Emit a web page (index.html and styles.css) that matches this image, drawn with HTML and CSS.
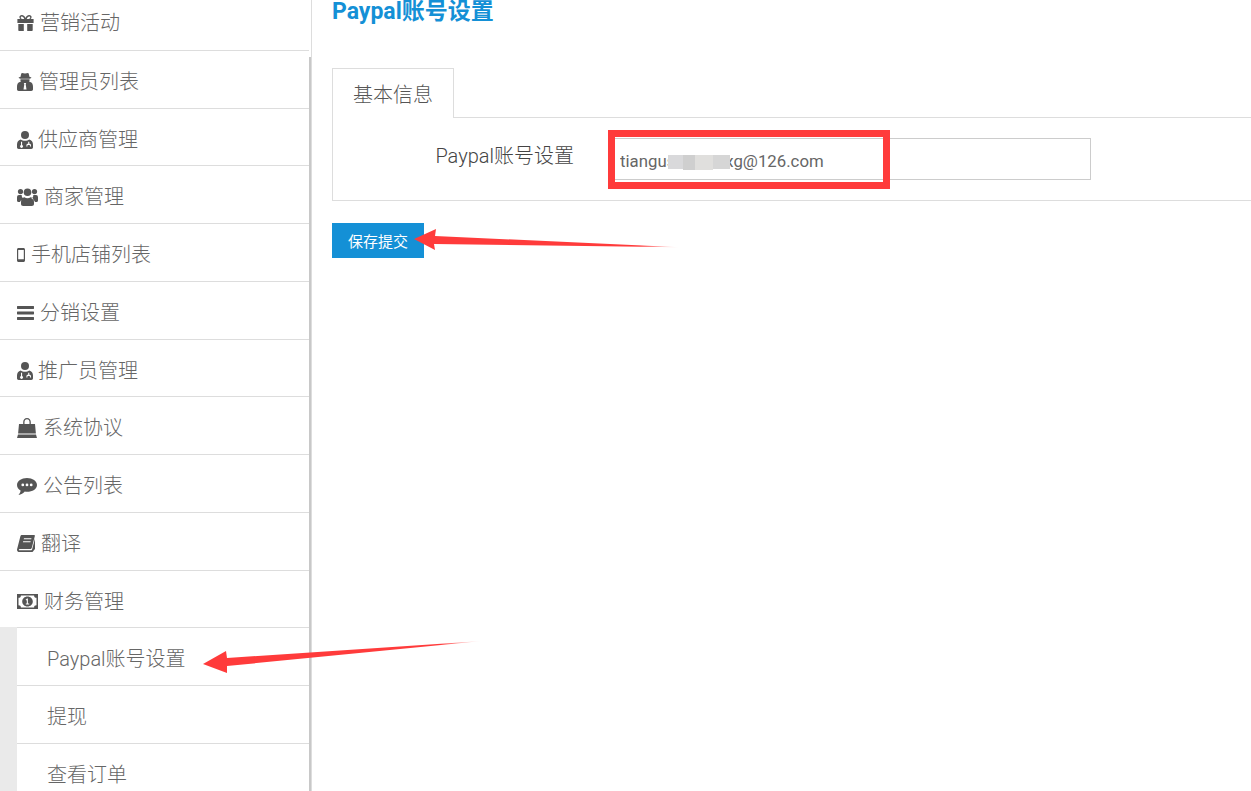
FILE: index.html
```html
<!DOCTYPE html>
<html lang="zh-CN">
<head>
<meta charset="utf-8">
<title>Paypal账号设置</title>
<link rel="stylesheet" href="styles.css">
</head>
<body>
<div class="page">
  <aside class="sidebar">
    <nav class="menu">
      <a class="item item-first"><svg class="icon" width="17" height="16" viewBox="0 0 17 16"><path fill-rule="evenodd" d="M4.800 0C3.300 0 2.400 1 2.400 2.100 2.400 3 2.800 3.600 3.400 4H.4v4h16.200V4h-3c.6-.4 1-1 1-1.900C14.600 1 13.700 0 12.200 0 10.400 0 9.100 1.400 8.500 2.900 7.900 1.400 6.600 0 4.800 0zM4.900 1.500c1 0 1.900 1.200 2.400 2.400H5c-.8 0-1.200-.8-1.200-1.300 0-.6.400-1.100 1.100-1.100zM12.100 1.500c.7 0 1.100.5 1.100 1.100 0 .5-.4 1.300-1.200 1.300H9.700c.5-1.200 1.400-2.400 2.400-2.400z"/><path d="M1.300 9h5.500v7H2.300c-.6 0-1-.4-1-1zM10.200 9h5.500v6c0 .6-.4 1-1 1h-4.500z"/></svg><span>营销活动</span></a>
      <a class="item"><svg class="icon" width="16" height="18" viewBox="0 0 16 18"><path fill-rule="evenodd" d="M5 0c.8 0 1.800.5 3 .5S10.200 0 11 0c.7 0 1.200 2.200 1.400 3.800 1 .2 2 .5 2 1 0 .4-.9.7-1.900.9H3.500C2.500 5.500 1.600 5.200 1.600 4.800c0-.5 1-.8 2-1C3.800 2.200 4.300 0 5 0z"/><path fill-rule="evenodd" d="M3.500 6.300h9c.2.7.1 1.700-.3 2.500l.9.200c1.900.4 2.900 2 2.900 4.700v2.600c0 1-.7 1.700-1.700 1.700H1.700C.7 18 0 17.300 0 16.300v-2.600C0 11 1 9.400 2.900 9l.9-.2C3.400 8 3.300 7 3.500 6.300zM6.800 10l.5 1.200-.8 5.300h3l-.8-5.300.5-1.200z"/></svg><span>管理员列表</span></a>
      <a class="item item-tight"><svg class="icon" width="16" height="18" viewBox="0 0 16 18"><circle cx="8" cy="4" r="4"/><path fill-rule="evenodd" d="M3.700 8.400C4.800 9.200 6.300 9.700 8 9.700s3.200-.5 4.300-1.300C14.600 9 16 10.800 16 13.500v2.800c0 1-.7 1.700-1.700 1.700H1.700C.7 18 0 17.300 0 16.300v-2.800C0 10.800 1.400 9 3.700 8.400zM4 10.800v3.100a1.500 1.500 0 1 0 1.100 0v-3.100zM11.200 10.800v2H10.500c-.5 0-.8.3-.9.800l-.3 1.900h1.100l.2-1.600h2.200l.2 1.600h1.100l-.3-1.900c-.1-.5-.4-.8-.9-.8h-.6v-2z"/></svg><span>供应商管理</span></a>
      <a class="item"><svg class="icon" width="21" height="18" viewBox="0 0 21 18"><circle cx="3.500" cy="3.600" r="2.600"/><circle cx="17.500" cy="3.600" r="2.600"/><circle cx="10.500" cy="4.300" r="3.800"/><path d="M0 9.500C0 7.800.8 7 2 7h2.700c-.1 1.700.7 3 1.900 3.800C4.600 11.500 3.500 12.500 3 14H1.500C.6 14 0 13.400 0 12.500zM21 9.500C21 7.800 20.200 7 19 7h-2.700c.1 1.700-.7 3-1.900 3.800 2 .7 3.100 1.700 3.600 3.200h1.500c.9 0 1.500-.6 1.500-1.500zM7.500 9.300c.8.700 1.800 1 3 1s2.200-.3 3-1c2.300.3 3.500 2 3.500 5v1.400c0 1.300-.8 2.300-2.200 2.300H6.200C4.800 18 4 17 4 15.700v-1.400c0-3 1.200-4.700 3.500-5z"/></svg><span>商家管理</span></a>
      <a class="item"><svg class="icon" width="8" height="14" viewBox="0 0 8 14"><path fill-rule="evenodd" d="M1.500 0h5C7.300 0 8 .7 8 1.500v11c0 .8-.7 1.500-1.500 1.500h-5C.7 14 0 13.300 0 12.500v-11C0 .7.700 0 1.500 0zM1.200 2v9.300h5.600V2z"/></svg><span>手机店铺列表</span></a>
      <a class="item"><svg class="icon" width="17" height="14" viewBox="0 0 17 14"><path d="M.5 0h16c.3 0 .5.200.5.500v2c0 .3-.2.500-.5.500H.5C.2 3 0 2.800 0 2.500v-2C0 .2.200 0 .5 0zM.5 5.500h16c.3 0 .5.200.5.500v2c0 .3-.2.500-.5.500H.5C.2 8.500 0 8.300 0 8V6c0-.3.200-.5.500-.5zM.5 11h16c.3 0 .5.200.5.500v2c0 .3-.2.500-.5.500H.5c-.3 0-.5-.2-.5-.5v-2c0-.3.200-.5.500-.5z"/></svg><span>分销设置</span></a>
      <a class="item item-tight"><svg class="icon" width="16" height="18" viewBox="0 0 16 18"><circle cx="8" cy="4" r="4"/><path fill-rule="evenodd" d="M3.700 8.400C4.800 9.200 6.300 9.700 8 9.700s3.200-.5 4.300-1.300C14.600 9 16 10.800 16 13.500v2.800c0 1-.7 1.700-1.700 1.700H1.700C.7 18 0 17.300 0 16.300v-2.800C0 10.800 1.400 9 3.700 8.400zM4 10.800v3.100a1.500 1.500 0 1 0 1.100 0v-3.100zM11.200 10.800v2H10.500c-.5 0-.8.3-.9.800l-.3 1.900h1.100l.2-1.600h2.200l.2 1.600h1.100l-.3-1.900c-.1-.5-.4-.8-.9-.8h-.6v-2z"/></svg><span>推广员管理</span></a>
      <a class="item"><svg class="icon" width="20" height="20" viewBox="0 0 20 20"><path fill-rule="evenodd" d="M10 0c2.400 0 3.800 1.800 3.800 4.100V6H18l.9 9.500H1.100L2 6h4.200V4.100C6.200 1.800 7.600 0 10 0zM10 1.300c-1.600 0-2.500 1.200-2.500 2.800V6h5V4.100c0-1.600-.9-2.800-2.500-2.800z"/><path d="M1 16.500h18L20 20H0z"/></svg><span>系统协议</span></a>
      <a class="item"><svg class="icon" width="20" height="17" viewBox="0 0 20 17"><path fill-rule="evenodd" d="M10 0c5.500 0 10 3 10 6.900s-4.500 6.900-10 6.900c-.8 0-1.500-.1-2.200-.2C6.300 15.500 4 16.600 1.500 17c1-1.200 1.900-2.500 2.100-4.500C1.400 11.200 0 9.200 0 6.900 0 3 4.500 0 10 0zM5.800 5.500a1.400 1.400 0 1 0 0 2.800 1.400 1.400 0 0 0 0-2.800zM10 5.500a1.400 1.400 0 1 0 0 2.800 1.400 1.400 0 0 0 0-2.800zM14.200 5.500a1.400 1.400 0 1 0 0 2.800 1.400 1.400 0 0 0 0-2.800z"/></svg><span>公告列表</span></a>
      <a class="item"><svg class="icon" width="18" height="17" viewBox="0 0 18 17"><path fill-rule="evenodd" d="M5 0h12c.7 0 1 .5.800 1.200l-3 11.600c-.2.800-.9 1.200-1.600 1.200H2.800c-.6 0-1 .3-1 .7 0 .3.300.6.900.6h11.600c.3 0 .6-.2.700-.5L18 3.600V14l-1.500 1.800c-.3.800-1 1.200-1.800 1.200H2.500C1.100 17 0 16.100 0 14.700c0-.4.100-.7.200-1L3.400 1.300C3.600.5 4.200 0 5 0zM7 3.300l-.3 1h7.500l.3-1zM6.200 6.300l-.3 1h7.500l.3-1z"/></svg><span>翻译</span></a>
      <a class="item item-open"><svg class="icon" width="21" height="15" viewBox="0 0 21 15"><path fill-rule="evenodd" d="M0 0h21v15H0zM1.500 3.800v7.400c1.700 0 2.400.8 2.400 2.400h13.200c0-1.600.7-2.400 2.400-2.400V3.800c-1.700 0-2.400-.8-2.400-2.400H3.900c0 1.600-.7 2.400-2.400 2.400zM10.500 2.500c3 0 5.300 2.200 5.300 5s-2.300 5-5.300 5-5.300-2.200-5.300-5 2.300-5 5.300-5zM10.900 4.500H10L8.600 5.800l.7.700.5-.5v3.400H8.800v1h3.400v-1h-1.300z"/></svg><span>财务管理</span></a>
      <div class="submenu">
        <a class="subitem">Paypal账号设置</a>
        <a class="subitem">提现</a>
        <a class="subitem">查看订单</a>
      </div>
    </nav>
    <div class="scroll-thumb"></div>
  </aside>

  <main class="main">
    <h1 class="title">Paypal账号设置</h1>
    <div class="tabs"><div class="tab">基本信息</div></div>
    <div class="panel">
      <div class="field">
        <label class="field-label" for="paypal">Paypal账号设置</label>
        <input class="field-input" id="paypal" type="text" value="tiangusxxxxxxxg@126.com">
      </div>
    </div>
    <button class="submit" type="button">保存提交</button>
  </main>

  <svg class="annotations" width="1251" height="791" viewBox="0 0 1251 791" aria-hidden="true">
    <defs>
      <linearGradient id="fade-a" gradientUnits="userSpaceOnUse" x1="640" y1="0" x2="680" y2="0">
        <stop offset="0" stop-color="#ff3b3b"/><stop offset="1" stop-color="#ff3b3b" stop-opacity="0"/>
      </linearGradient>
      <linearGradient id="fade-b" gradientUnits="userSpaceOnUse" x1="440" y1="0" x2="482" y2="0">
        <stop offset="0" stop-color="#ff3b3b"/><stop offset="1" stop-color="#ff3b3b" stop-opacity="0"/>
      </linearGradient>
      <filter id="soft" x="-10%" y="-30%" width="120%" height="160%"><feGaussianBlur stdDeviation="0.7"/></filter>
    </defs>
    <g filter="url(#soft)">
      <rect x="668" y="155" width="16" height="14" fill="#d9d9db"/>
      <rect x="683" y="155" width="12" height="15" fill="#cfcfcf"/>
      <rect x="695" y="155" width="18" height="15" fill="#e0dfdd"/>
      <rect x="713" y="155" width="17" height="14" fill="#d6d6d6"/>
    </g>
    <path class="red-box" fill-rule="evenodd" d="M608 130H890V189H608zM615 137V182H883V137z"/>
    <path fill="url(#fade-a)" d="M414 239 436 229 435 236 680 247.300 434 244 435 250z"/>
    <path fill="url(#fade-b)" d="M203 664 226 651 227 658 482 641 227 666 227 673z"/>
  </svg>
</div>
</body>
</html>
```
FILE: styles.css
```css
* { box-sizing: border-box; }
html, body { margin: 0; padding: 0; height: 100%; background: #fff; overflow: hidden; }
body {
  font-family: Roboto, "Noto Sans CJK SC", sans-serif;
  font-weight: 300;
  color: #666;
}
.page { position: relative; display: flex; width: 1251px; height: 791px; overflow: hidden; }

/* Sidebar */
.sidebar {
  position: relative;
  flex: 0 0 312px;
  border-right: 1px solid #ddd;
  overflow: hidden;
}
.menu { width: 309px; }
.item {
  display: flex;
  align-items: center;
  gap: 6px;
  height: 57.75px;
  padding-top: 5px;
  padding-left: 17px;
  border-bottom: 1px solid #ddd;
  font-size: 20px;
  line-height: 1;
  color: #666;
}
.item-first { height: 50.9px; padding-top: 0; padding-bottom: 3px; }
.item-tight { gap: 5px; }
.item-open { height: 56.75px; border-bottom: 0; }
.icon { flex: none; fill: #555; }
.submenu { background: #eaeaea; padding-left: 17px; }
.subitem {
  display: flex;
  align-items: center;
  height: 57.75px;
  padding-top: 2px;
  padding-left: 30px;
  background: #fff;
  border-top: 1px solid #ddd;
  font-size: 20px;
  color: #666;
}
.scroll-thumb {
  position: absolute;
  top: 57px;
  bottom: 0;
  left: 309px;
  width: 2px;
  background: #c8c8c8;
}

/* Main */
.main { flex: 1; min-width: 0; padding-left: 20px; }
.title {
  margin: 0 0 46px;
  height: 22px;
  font-size: 23px;
  line-height: 24px;
  font-weight: 700;
  color: #1490d6;
  white-space: nowrap;
}
.tabs { display: flex; height: 50px; border-bottom: 1px solid #ddd; }
.tab {
  width: 122px;
  height: 50px;
  padding-top: 1px;
  border: 1px solid #ddd;
  border-bottom: 0;
  background: #fff;
  text-align: center;
  font-size: 20px;
  line-height: 50px;
  color: #555;
}
.panel {
  height: 83px;
  padding-top: 20px;
  border-left: 1px solid #ddd;
  border-bottom: 1px solid #ddd;
}
.field { display: flex; align-items: flex-start; }
.field-label {
  width: 241px;
  padding-top: 6px;
  text-align: right;
  font-size: 20px;
  line-height: 24px;
  color: #444;
}
.field-input {
  width: 482px;
  height: 42px;
  margin-left: 35px;
  padding: 4px 10px 0;
  border: 1px solid #ccc;
  border-radius: 0;
  outline: 0;
  background: #fff;
  font: 400 16.8px Roboto, "Noto Sans CJK SC", sans-serif;
  color: #666;
}
.submit {
  display: block;
  width: 92px;
  height: 35px;
  margin-top: 22px;
  padding: 0;
  border: 0;
  background: #1490d6;
  color: #fff;
  font: 400 15px "Noto Sans CJK SC", sans-serif;
}

/* Screenshot annotations drawn on top of the page */
.annotations { position: absolute; top: 0; left: 0; pointer-events: none; }
.red-box { fill: #ff3b3b; }
```
